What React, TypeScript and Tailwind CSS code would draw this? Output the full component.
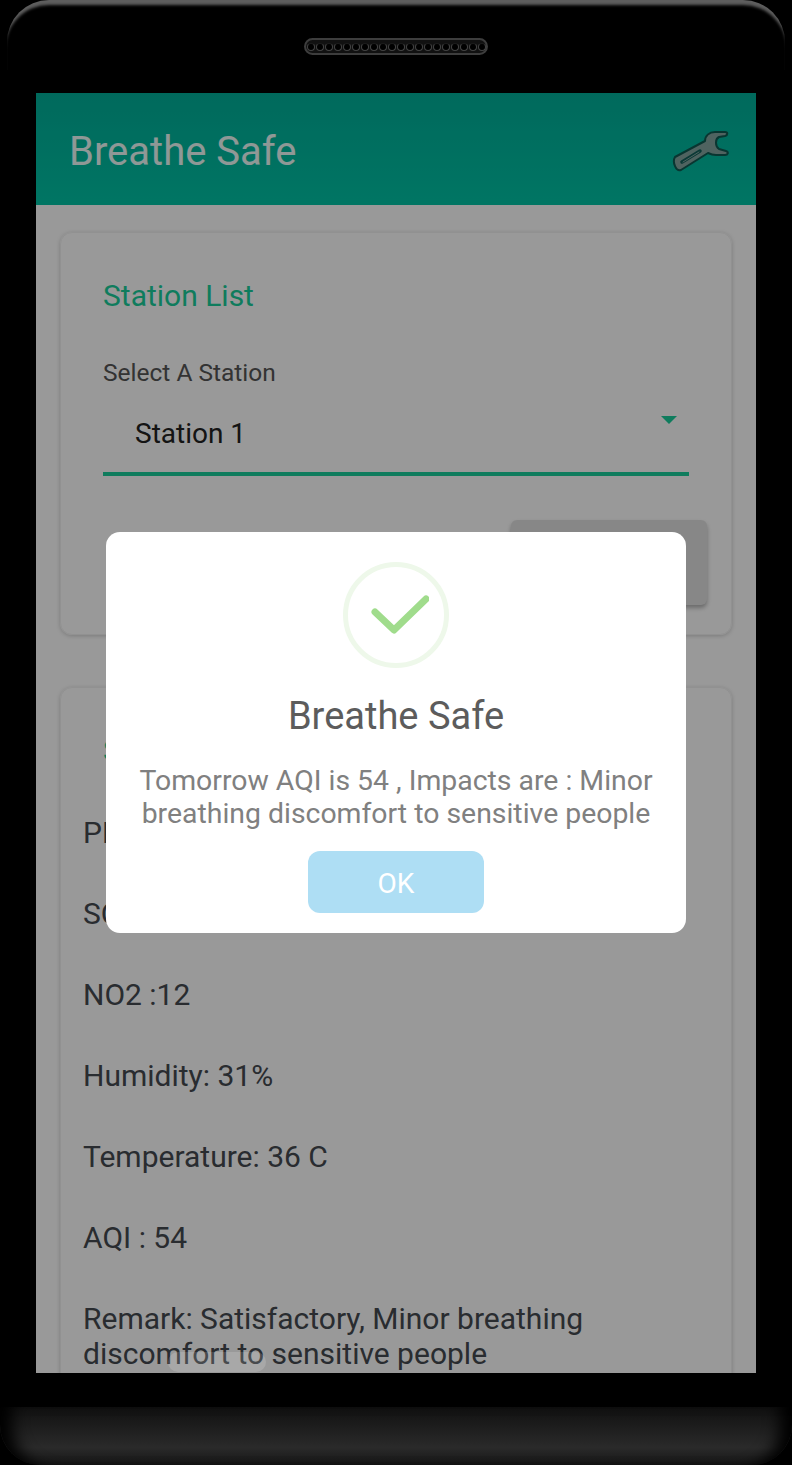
const ROWS = ["PM2.5 :18", "SO2 :9", "NO2 :12", "Humidity: 31%", "Temperature: 36 C", "AQI : 54"];

function SpeakerGrille() {
  return (
    <div className="flex h-[17px] w-[184px] items-center justify-center gap-[1px] rounded-full border-2 border-[#3d3d3d] bg-[#111]">
      {Array.from({ length: 20 }).map((_, i) => (
        <span key={i} className="h-[8px] w-[8px] rounded-full border border-[#444] border-t-[#1c1c1c] bg-black" />
      ))}
    </div>
  );
}

function WrenchIcon() {
  return (
    <svg width="58" height="46" viewBox="0 0 58 46" fill="none">
      <path
        d="M3 29 L33 13 C33 8 37 4 43 4 L53 4 C56 4 56 7 53 8 L47 9 C43 11 43 18 47 21 L54 23 C57 24 56 27 53 27 L44 27 C41 27 38 26 36 25 L9 42 C4 44 0 34 3 29 Z"
        fill="#84a5a0"
        stroke="#0f5a52"
        strokeWidth="2"
        strokeLinejoin="round"
      />
      <path d="M10 34 L28 23" stroke="#13605a" strokeWidth="3.5" strokeLinecap="round" />
      <path d="M11 34 L27 24" stroke="#84a5a0" strokeWidth="1" strokeLinecap="round" />
    </svg>
  );
}

export default function App() {
  return (
    <div
      className="relative flex h-[1465px] w-[792px] flex-col overflow-hidden bg-black"
      style={{ fontFamily: "Roboto, sans-serif" }}
    >
      {/* top edge highlight of the phone body */}
      <div className="pointer-events-none absolute left-[7px] right-[7px] top-0 h-[70px] rounded-t-[42px] shadow-[inset_0_7px_3px_-2px_#5e5e5e]" />

      <div className="flex h-[93px] shrink-0 justify-center pt-[38px]">
        <SpeakerGrille />
      </div>

      <div className="relative mx-[36px] h-[1280px] shrink-0 overflow-hidden bg-white">
        <header className="flex h-[112px] items-center justify-between bg-gradient-to-b from-[#00b09a] to-[#00c4a6] pl-[33px] pr-[26px]">
          <h1 className="pt-[6px] text-[40px] font-normal text-[#eefdfa]">Breathe Safe</h1>
          <div className="mt-[3px]">
            <WrenchIcon />
          </div>
        </header>

        <div className="flex flex-col gap-[52px] px-[24px] pt-[27px]">
          <section className="h-[403px] rounded-[12px] border border-[#f2f2f2] pl-[42px] pr-[42px] pt-[45px] shadow-[0_1px_4px_rgba(0,0,0,0.2)]">
            <h2 className="text-[30px] leading-[36px] text-[#19cf9c]">Station List</h2>
            <p className="mt-[44px] text-[24.5px] leading-[30px] text-[#555]">Select A Station</p>
            <div className="relative mt-[28px] flex h-[60px] items-start border-b-[4px] border-[#19cf9c] pl-[32px]">
              <span className="text-[28px] leading-[36px] text-[#222]">Station 1</span>
              <span className="absolute right-[12px] top-0 border-x-[8px] border-t-[8px] border-x-transparent border-t-[#19cf9c]" />
            </div>
            <div className="mr-[-18px] mt-[44px] flex justify-end">
              <div className="h-[85px] w-[196px] rounded-[6px] bg-[#e2e2e2] shadow-[0_3px_4px_rgba(0,0,0,0.3)]" />
            </div>
          </section>

          <section className="rounded-[12px] border border-[#f2f2f2] pb-[40px] pl-[22px] pr-[23px] pt-[45px] shadow-[0_1px_4px_rgba(0,0,0,0.2)]">
            <h2 className="pl-[20px] text-[30px] leading-[36px] text-[#19cf9c]">Station Data</h2>
            <div className="mt-[46px] flex flex-col gap-[46px] text-[30px] leading-[35px] text-[#454a50]">
              {ROWS.map((row) => (
                <p key={row}>{row}</p>
              ))}
              <p>Remark: Satisfactory, Minor breathing discomfort to sensitive people</p>
            </div>
          </section>
        </div>

        {/* dimmed backdrop + alert */}
        <div className="absolute inset-0 flex items-center justify-center bg-black/40 pb-[1px]">
          <div className="flex h-[401px] w-[580px] flex-col items-center rounded-[14px] bg-white pt-[30px]">
            <div className="flex h-[106px] w-[106px] items-center justify-center rounded-full border-[5px] border-[#eef8ea]">
              <svg width="66" height="44" viewBox="0 0 66 44" fill="none">
                <path
                  d="M12 19 L31 37 L63 6"
                  stroke="#a0dc8c"
                  strokeWidth="7"
                  strokeLinecap="round"
                  strokeLinejoin="round"
                />
              </svg>
            </div>
            <h3 className="mt-[25px] text-[38px] font-normal leading-[46px] text-[#5c5c5c]">Breathe Safe</h3>
            <p className="mt-[25px] w-[540px] text-center text-[28.4px] leading-[33px] text-[#808080]">
              Tomorrow AQI is 54 , Impacts are : Minor breathing discomfort to sensitive people
            </p>
            <button className="mt-[21px] h-[62px] w-[176px] rounded-[12px] bg-[#aedef4] pt-[4px] text-[28px] text-white">
              OK
            </button>
          </div>
        </div>

        {/* home pill overlay */}
        <div className="absolute bottom-[1px] left-[132px] h-[20px] w-[98px] rounded-[10px] bg-white/15" />
      </div>

      <div className="mt-[34px] h-[58px] shrink-0 rounded-b-[40px] bg-[linear-gradient(to_bottom,#111_0%,#2a2a2a_70%,#161616_100%)] shadow-[inset_22px_0_16px_-10px_#000,inset_-22px_0_16px_-10px_#000]" />
    </div>
  );
}
